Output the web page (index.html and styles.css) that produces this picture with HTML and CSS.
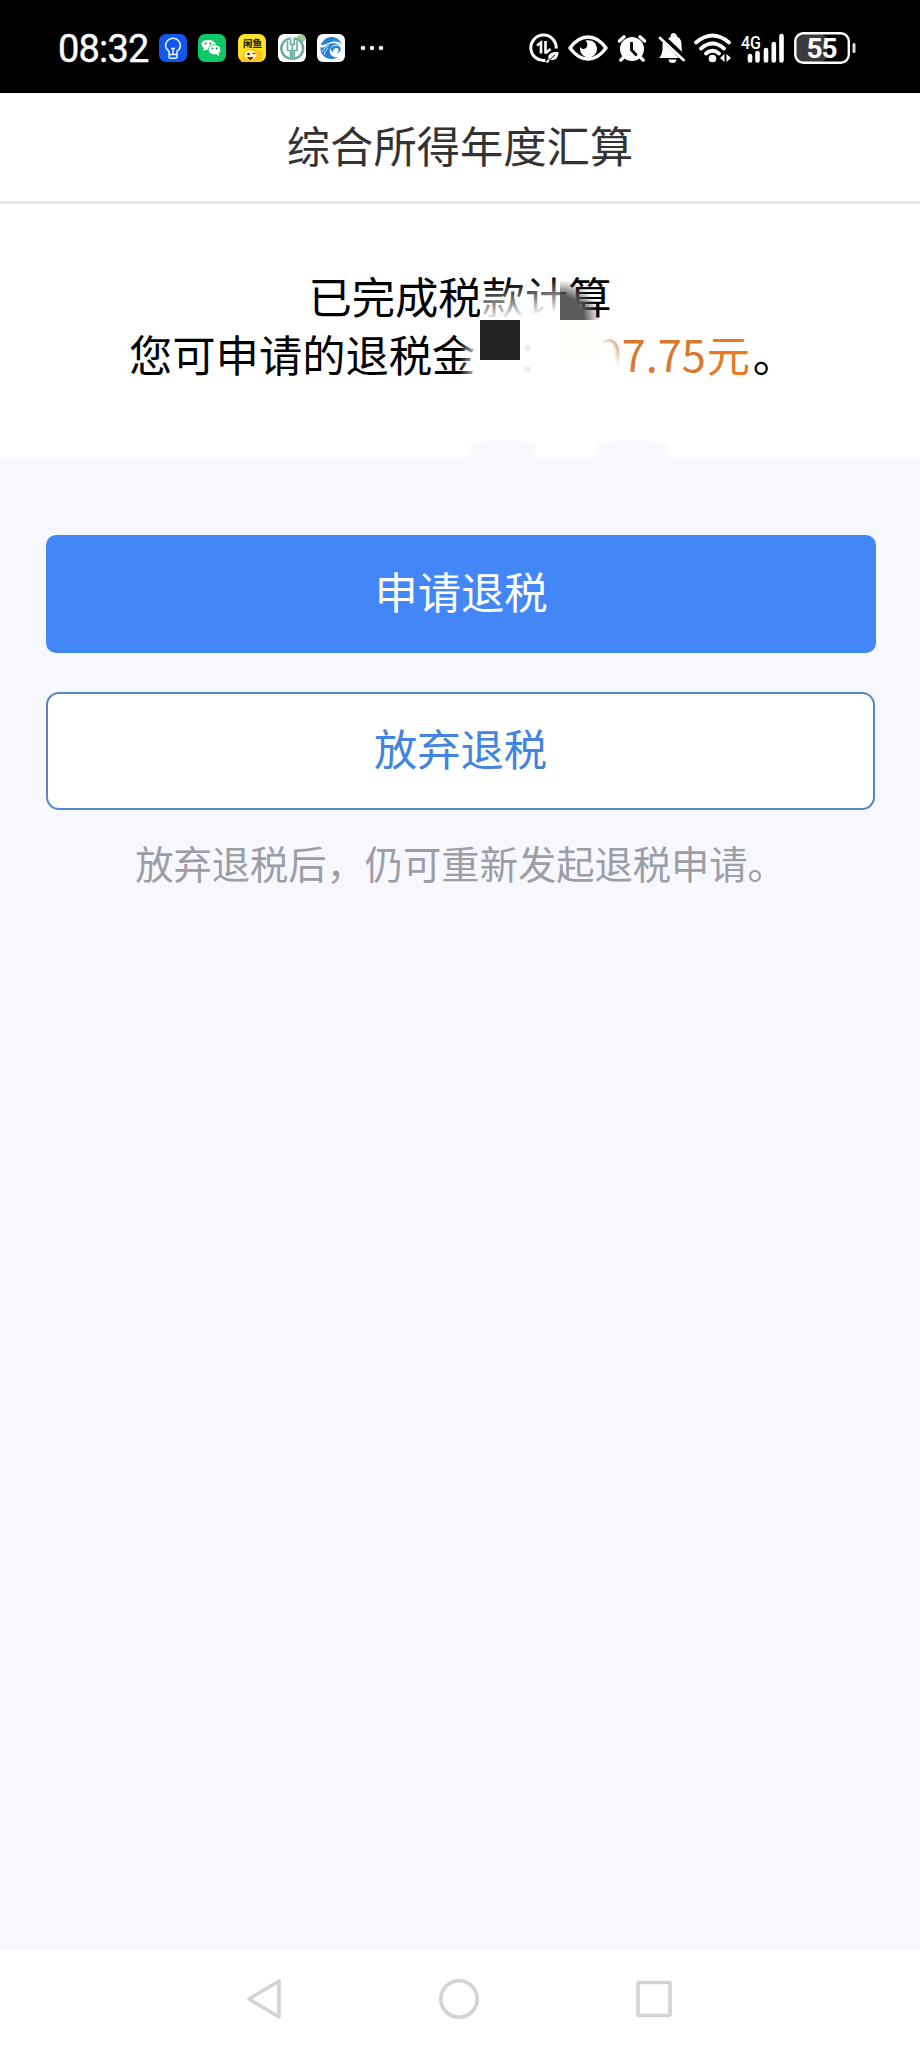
FILE: index.html
```html
<!DOCTYPE html>
<html lang="zh-CN">
<head>
  <meta charset="UTF-8">
  <title>综合所得年度汇算</title>
  <link rel="stylesheet" href="styles.css">
</head>
<body>

  <div class="status-bar">
    <div class="status-left">
      <span class="clock">08:32</span>
      <svg width="28" height="28" viewBox="0 0 28 28">
        <rect width="28" height="28" rx="7" fill="#1257ee"/>
        <path d="M10 19.5v-2.3C7.900 15.800 6.600 14 6.600 11.700a7.400 7.400 0 0 1 14.800 0c0 2.300-1.300 4.100-3.400 5.500v2.300M10 19.500v3.500q0 1.300 1.300 1.300h5.400q1.300 0 1.300-1.300v-3.500M10.500 20.500h7M14 20v-5M12 14.500h4" fill="none" stroke="#e8f3ff" stroke-width="1.500"/>
      </svg>
      <svg width="28" height="28" viewBox="0 0 28 28">
        <rect width="28" height="28" rx="7" fill="#0dc967"/>
        <path d="M5 17l1-3C1.500 11 3 6 10 6c5 0 8 2.500 8 5.500S15 16 10 16l-2-.2z" fill="#fff"/>
        <ellipse cx="16.500" cy="15.800" rx="6.300" ry="5" fill="#fff" stroke="#0dc967" stroke-width=".8"/>
        <path d="M18 20l3 2v-3z" fill="#fff"/>
        <circle cx="7.800" cy="9.500" r="1" fill="#0a8c48"/><circle cx="12.300" cy="9.500" r="1" fill="#0a8c48"/>
        <circle cx="14.500" cy="14.500" r=".9" fill="#0a8c48"/><circle cx="18.800" cy="14.500" r=".9" fill="#0a8c48"/>
      </svg>
      <svg width="28" height="28" viewBox="0 0 28 28">
        <rect width="28" height="28" rx="7" fill="#ffe328"/>
        <path d="M3 28c0-8 4-13 12-13 6 0 10 2 10 7l-2 6z" fill="#ffc414"/>
        <ellipse cx="12.500" cy="21" rx="6" ry="4.500" fill="#fff4c4"/>
        <text class="fish-label" x="14.500" y="12.800" text-anchor="middle">闲鱼</text>
        <circle cx="10.500" cy="20" r="1.300" fill="#222"/>
        <path d="M14.500 20q1.500-2 3 0M9.500 23.500q3 4 5.500 0z" fill="#8c241a" stroke="#333" stroke-width=".8"/>
      </svg>
      <svg width="28" height="28" viewBox="0 0 28 28">
        <rect width="28" height="28" rx="6" fill="#fff"/>
        <path d="M19 3q2-4 7-1.500 3 3 0 6-3 1.500-5-1-3 0-2-3.500" fill="#91d18f"/>
        <path d="M11.500 4.500a10.200 10.200 0 0 0 0 20M17 4.500a10.200 10.200 0 0 1 0 20" fill="none" stroke="#69aaa1" stroke-width="2.600"/>
        <path d="M12.500 3.500v7h3.800v-7M9.500 7v9.500h3V26M19 7v9.500h-2.800V26M14.300 10v16" fill="none" stroke="#69aaa1" stroke-width="1.600"/>
      </svg>
      <svg width="28" height="28" viewBox="0 0 28 28">
        <rect width="28" height="28" rx="6" fill="#fff"/>
        <path d="M20 4.500A11 11 0 0 0 4 11c4 1 8-4 15-3.500 3 .3 5 1.500 6 3.500-1-3-2.500-5-5-6.500z" fill="#2581d5"/>
        <path d="M3.500 13c-.5 6 3 11.500 10 12 3 .2 5-.5 7-1.500-6 0-9-4-7-9 1.500-3.500 5-5 10-3.500C17 8 12 9.500 9 12c-2 1.500-4 2-5.500 1z" fill="#2581d5"/>
        <path d="M14 14c2-3 8-3.500 9.500 0 1 2.500-1 5-4 5 2-1 3-3 1.500-4.500-2-1.500-5 0-5.500 4-1-1-2-3-1.500-4.500z" fill="#2581d5"/>
        <path d="M5 18q2.500-5 7-6.500M7 21q1-4.500 4-7" fill="none" stroke="#fff" stroke-width=".8"/>
      </svg>
      <svg class="more" width="24" height="6" viewBox="0 0 24 6" fill="#eee">
        <circle cx="3" cy="3" r="2.300"/><circle cx="12" cy="3" r="2.300"/><circle cx="21" cy="3" r="2.300"/>
      </svg>
    </div>

    <div class="status-right">
      <!-- data saver -->
      <svg width="30" height="30" viewBox="0 0 30 30" fill="none" stroke="#fff">
        <path d="M27.200 15.500A12.700 12.700 0 1 0 16.500 27.300" stroke-width="3"/>
        <path d="M8 12.500l4-3v11M16.500 8v11.500h1l4-3.500" stroke-width="2.600"/>
        <path d="M29.500 19c-7-.5-11.500 2-10 7.500 6 2 10-1 10-7.500z" fill="#fff" stroke="none"/>
        <path d="M17 30l9-8" stroke="#000" stroke-width="1"/>
        <path d="M17.500 29.500l2.500-2.500" stroke-width="2"/>
      </svg>
      <!-- eye comfort -->
      <svg width="40" height="28" viewBox="0 0 40 28">
        <path d="M2 14Q10 3 20 3t18 11Q30 25 20 25T2 14z" fill="none" stroke="#fff" stroke-width="3.400" stroke-linejoin="round"/>
        <path d="M17.500 6.500c6-1.500 11.500 2 11.500 8.500a8.500 8.500 0 0 1-17 0v-2c1.500 2.500 5 2.500 6.500.5 1.500-2.300 1-5-1-7z" fill="#fff"/>
      </svg>
      <!-- alarm -->
      <svg class="alarm" width="30" height="30" viewBox="0 0 32 30">
        <circle cx="16" cy="16" r="12.800" fill="#fff"/>
        <path d="M2.500 7.500l5-4.500M29.500 7.500l-5-4.500M7 25l-3 3M25 25l3 3" stroke="#fff" stroke-width="3.500" stroke-linecap="round"/>
        <path d="M15.500 8.500V17l5.500 6" fill="none" stroke="#000" stroke-width="3"/>
      </svg>
      <!-- muted -->
      <svg width="27" height="30" viewBox="0 0 27 30" fill="#fff">
        <path d="M1 25q3-3 3.500-8v-5q0-1 .5-3L21 25z"/>
        <path d="M10 5.500q1.500-1 2.500-1.500 0-4 3-4t3.500 3.500c4 2 4.500 5 4.500 8.500 0 2 .2 4.500.8 7z"/>
        <path d="M10.500 26.500h8q-.5 3.500-4 3.500t-4-3.500z"/>
        <path d="M2 5l23.500 22" stroke="#fff" stroke-width="2.800" stroke-linecap="round"/>
        <path d="M5.500 4.500l18.500 17" stroke="#000" stroke-width="2"/>
      </svg>
      <!-- wifi -->
      <svg width="38" height="30" viewBox="0 0 38 30" fill="none" stroke="#fff" stroke-width="3.700" stroke-linecap="round">
        <path d="M2 9.500Q18.500-4.500 35 9.500M7 15.500q11.500-10 23 0M12 20.500q6.500-5.500 13 0"/>
        <circle cx="18.500" cy="25.500" r="3.800" fill="#fff" stroke="none"/>
        <path d="M30.500 21v8l-4.500-4zM32.500 21v8l4.500-4z" fill="#fff" stroke="none"/>
      </svg>
      <!-- signal -->
      <svg class="signal" width="44" height="30" viewBox="0 0 44 30">
        <text class="net-label" x="0" y="15.500" textLength="20" lengthAdjust="spacingAndGlyphs">4G</text>
        <path d="M9 23v4.500M16.500 20v7.500M25 17v10.500M32.800 11v16.500M40.500 3v24.500" stroke="#fff" stroke-width="4.600" stroke-linecap="round"/>
      </svg>
      <!-- battery -->
      <svg width="62" height="34" viewBox="0 0 62 34">
        <rect x="2" y="3" width="31" height="28" rx="7" fill="#3a3a3a"/>
        <rect x="1.300" y="2.300" width="53.500" height="29.500" rx="8" fill="none" stroke="#fff" stroke-width="2.400"/>
        <path d="M60 13.500v7" stroke="#ddd" stroke-width="3" stroke-linecap="round"/>
        <text class="battery-label" x="27.500" y="26.500" text-anchor="middle">55</text>
      </svg>
    </div>
  </div>

  <header class="page-header">综合所得年度汇算</header>

  <section class="result">
    <p>已完成税款计算</p>
    <p class="refund"><span>您可申请的退税金</span><span class="colon">：</span><span class="amount">97.75<span class="unit">元</span></span><span>。</span></p>
    <!-- hidden part of the amount -->
    <div class="mask">
      <i class="fade-text"></i>
      <i class="fade-edge"></i>
      <i class="fade-number"></i>
      <i class="block-dark"></i>
      <i class="block-grey"></i>
      <i class="block-cream"></i>
      <i class="smudge smudge-a"></i>
      <i class="smudge smudge-b"></i>
    </div>
  </section>

  <main>
    <button class="btn btn-primary">申请退税</button>
    <button class="btn btn-outline">放弃退税</button>
    <p class="hint">放弃退税后，仍可重新发起退税申请。</p>
  </main>

  <nav class="nav-bar">
    <svg width="36" height="42" viewBox="0 0 36 42"><path d="M3 21L33 3v36z"/></svg>
    <svg width="42" height="42" viewBox="0 0 42 42"><circle cx="21" cy="21" r="18.200"/></svg>
    <svg width="36" height="38" viewBox="0 0 36 38"><rect x="2" y="2.500" width="32" height="33" rx="1"/></svg>
  </nav>

</body>
</html>
```
FILE: styles.css
```css
* {
  box-sizing: border-box;
}
body {
  margin: 0;
  min-height: 2048px;
  display: flex;
  flex-direction: column;
  background: #f6f8fd;
  font-family: "Noto Sans CJK SC", sans-serif;
  color: #000;
}
p {
  margin: 0;
}
svg {
  display: block;
  flex-shrink: 0;
}

/* status bar */
.status-bar {
  height: 93px;
  padding: 3px 64px 0 58px;
  background: #000;
  color: #fff;
  display: flex;
  justify-content: space-between;
  align-items: center;
}
.status-left {
  display: flex;
  align-items: center;
  gap: 11.7px;
}
.clock {
  width: 89px;
  padding-top: 2px;
  font-family: Roboto, sans-serif;
  font-size: 38px;
  line-height: 44px;
  letter-spacing: -0.8px;
  -webkit-text-stroke: 0.4px #fff;
}
.more {
  margin-left: 3px;
}
.status-right {
  display: flex;
  align-items: center;
  gap: 9px;
}
.alarm {
  margin-right: 2px;
}
.signal {
  overflow: visible;
}
.fish-label {
  font-size: 9.5px;
  font-weight: 900;
  fill: #2a2500;
}
.net-label {
  font-family: Roboto, sans-serif;
  font-size: 19px;
  font-weight: 500;
  fill: #fff;
}
.battery-label {
  font-family: Roboto, sans-serif;
  font-size: 28px;
  font-weight: 700;
  letter-spacing: -1px;
  fill: #fff;
}

.page-header {
  height: 111px;
  border-bottom: 3px solid #e8e8e8;
  background: #fff;
  color: #333;
  font-size: 43.3px;
  line-height: 102px;
  text-align: center;
}

/* calculation result */
.result {
  position: relative;
  height: 253px;
  padding-top: 62px;
  background: #fff;
  font-size: 43.3px;
  line-height: 58px;
  text-align: center;
}
.refund {
  display: flex;
  padding-left: 129px;
}
.colon {
  margin-left: 41px;
  color: #eee;
}
.amount {
  width: 155px;
  margin-left: 38px;
  color: #d9782f;
  white-space: nowrap;
  text-align: left;
}
.unit {
  margin-left: 1px;
  color: #e77a23;
}

.mask i {
  position: absolute;
}
.fade-text {
  left: 480px;
  top: 72px;
  width: 80px;
  height: 44px;
  background: linear-gradient(172deg, transparent 20%, #fff 85%);
}
.fade-edge {
  left: 459px;
  top: 130px;
  width: 21px;
  height: 48px;
  background: linear-gradient(to right, transparent, #fff);
}
.fade-number {
  left: 590px;
  top: 120px;
  width: 50px;
  height: 58px;
  background: radial-gradient(ellipse 44px 64px at 0 100%, #fff 65%, transparent 100%);
}
.block-dark {
  left: 480px;
  top: 116px;
  width: 40px;
  height: 40px;
  background: #242424;
}
.block-grey {
  left: 560px;
  top: 76px;
  width: 40px;
  height: 40px;
  background: radial-gradient(circle 40px at 0 100%, #5a5a5a 60%, transparent 100%);
}
.block-cream {
  left: 560px;
  top: 116px;
  width: 40px;
  height: 40px;
  background: #fffefa;
}
.smudge {
  top: 236px;
  height: 17px;
  background: radial-gradient(ellipse at 50% 60%, #f6f8fd 50%, transparent 100%);
}
.smudge-a {
  left: 470px;
  width: 66px;
}
.smudge-b {
  left: 596px;
  width: 72px;
}

main {
  flex: 1;
  padding: 78px 45px 0 46px;
  display: flex;
  flex-direction: column;
}
.btn {
  height: 118px;
  margin: 0 0 39px;
  padding: 0 0 9px;
  border: none;
  border-radius: 10px;
  font-family: inherit;
  font-size: 43.3px;
}
.btn-primary {
  margin-right: -1px;
  background: #4387f7;
  color: #fff;
}
.btn-outline {
  margin-bottom: 25px;
  border: 2px solid #5686ca;
  border-radius: 13px;
  background: #fff;
  color: #4384df;
}
.hint {
  color: #9c9da6;
  font-size: 38.27px;
  line-height: 55px;
  text-align: center;
}

/* system navigation */
.nav-bar {
  height: 98px;
  padding-right: 2px;
  background: #fff;
  display: flex;
  justify-content: center;
  align-items: center;
  gap: 156px;
}
.nav-bar svg {
  fill: none;
  stroke: #d3d3d3;
  stroke-width: 3.6;
  stroke-linejoin: round;
}
```
